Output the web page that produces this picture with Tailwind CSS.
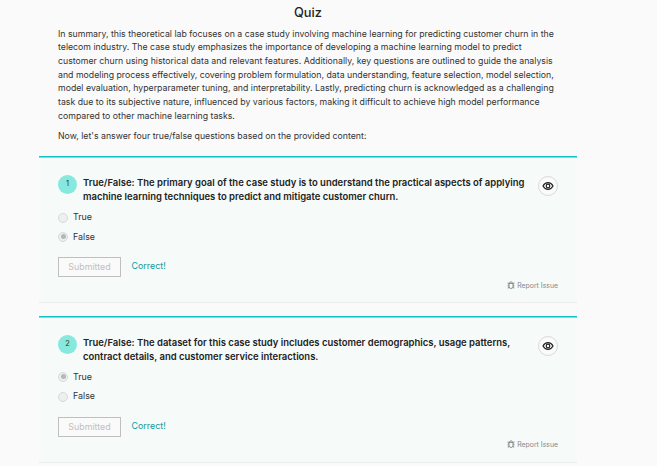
<!DOCTYPE html>
<html lang="en">
<head>
<meta charset="utf-8">
<title>Quiz</title>
<script src="https://cdn.jsdelivr.net/npm/@tailwindcss/browser@4"></script>
</head>
<body class="h-[466px] w-[658px] overflow-hidden border-r border-white bg-[#fafafa] font-['Inter',sans-serif] text-[8.900px] leading-[13.8px] text-[#333]">
<svg class="hidden">
  <symbol id="eye" viewBox="0 0 12 12"><g fill="none" stroke="#222"><path d="M1 6C2.200 3.700 3.900 2.700 6 2.700S9.800 3.700 11 6C9.800 8.300 8.100 9.300 6 9.300S2.200 8.300 1 6Z" stroke-width="1.200"/><circle cx="6" cy="6" r="1.800" stroke-width="1.200"/></g></symbol>
  <symbol id="bug" viewBox="0 0 8 8"><path d="M2 2.500h4V5.500a2 2 0 0 1-4 0ZM2.500 2.300a1.500 1.500 0 0 1 3 0M2 3.300 1 2.600V1.500M6 3.300 7 2.600V1.500M2 4.800H.500M6 4.800H7.500M2.200 6 1.200 6.600V7.500M5.800 6 6.800 6.600V7.500" fill="none" stroke="#777" stroke-width=".8"/></symbol>
</svg>
<main class="ml-[39px] w-[538px]">
  <h1 class="pt-1 text-center text-[12.800px] leading-[18px] font-medium text-[#222]">Quiz</h1>
  <div class="px-[19px] pt-[5.600px] text-[8.760px] leading-[13.700px] whitespace-nowrap">
    <p>In summary, this theoretical lab focuses on a case study involving machine learning for predicting customer churn in the<br>telecom industry. The case study emphasizes the importance of developing a machine learning model to predict<br>customer churn using historical data and relevant features. Additionally, key questions are outlined to guide the analysis<br>and modeling process effectively, covering problem formulation, data understanding, feature selection, model selection,<br>model evaluation, hyperparameter tuning, and interpretability. Lastly, predicting churn is acknowledged as a challenging<br>task due to its subjective nature, influenced by various factors, making it difficult to achieve high model performance<br>compared to other machine learning tasks.</p>
    <p class="mt-[6px]">Now, let's answer four true/false questions based on the provided content:</p>
  </div>

  <section class="mt-[12.800px] h-[147px] border-t border-b border-t-[#13c2c2] border-b-[#ececec] bg-[#f6faf9] px-[19px] pt-[17.500px] shadow-[inset_0_1px_0_#80dcdb]">
    <div class="flex items-start">
      <span class="flex size-[19px] shrink-0 items-center justify-center rounded-full bg-[#87e8de] text-[7.500px] text-[#333]">1</span>
      <h2 class="ml-[6px] grow pt-px text-[9.480px] leading-[14px] whitespace-nowrap font-semibold text-[#222]">True/False: The primary goal of the case study is to understand the practical aspects of applying<br>machine learning techniques to predict and mitigate customer churn.</h2>
      <button class="mt-px flex size-5 shrink-0 items-center justify-center rounded-full border border-[#d9d9d9] bg-[#fafafa]"><svg class="size-3"><use href="#eye"/></svg></button>
    </div>
    <div class="mt-[3px] flex h-5 items-center gap-[5px]"><span class="mt-0.5 size-[10px] rounded-full border border-[#d9d9d9] bg-[#eeefef]"></span><span>True</span></div>
    <div class="flex h-5 items-center gap-[5px]"><span class="flex size-[10px] items-center justify-center rounded-full border border-[#d9d9d9] bg-[#eeefef]"><i class="size-[5px] rounded-full bg-[#b5b8b7]"></i></span><span>False</span></div>
    <div class="mt-[10px] flex items-start">
      <button class="h-5 w-[63px] border border-[#bfbfbf] bg-[#fafafa] pb-px leading-[17px] text-[#bfbfbf]">Submitted</button>
      <span class="ml-[10.500px] pt-[2px] text-[#13999c]">Correct!</span>
    </div>
    <div class="mt-[2px] flex items-center justify-end gap-[2px] text-[6.900px] text-[#888]"><svg class="size-2"><use href="#bug"/></svg><span>Report Issue</span></div>
  </section>

  <section class="mt-[13px] h-[147px] border-t border-b border-t-[#13c2c2] border-b-[#ececec] bg-[#f6faf9] px-[19px] pt-[17.500px] shadow-[inset_0_1px_0_#80dcdb]">
    <div class="flex items-start">
      <span class="flex size-[19px] shrink-0 items-center justify-center rounded-full bg-[#87e8de] text-[7.500px] text-[#333]">2</span>
      <h2 class="ml-[6px] grow pt-px text-[9.480px] leading-[14px] whitespace-nowrap font-semibold text-[#222]">True/False: The dataset for this case study includes customer demographics, usage patterns,<br>contract details, and customer service interactions.</h2>
      <button class="mt-px flex size-5 shrink-0 items-center justify-center rounded-full border border-[#d9d9d9] bg-[#fafafa]"><svg class="size-3"><use href="#eye"/></svg></button>
    </div>
    <div class="mt-[3px] flex h-5 items-center gap-[5px]"><span class="flex size-[10px] items-center justify-center rounded-full border border-[#d9d9d9] bg-[#eeefef]"><i class="size-[5px] rounded-full bg-[#b5b8b7]"></i></span><span>True</span></div>
    <div class="flex h-[19px] items-center gap-[5px]"><span class="mt-px size-[10px] rounded-full border border-[#d9d9d9] bg-[#eeefef]"></span><span>False</span></div>
    <div class="mt-[11px] flex items-start">
      <button class="h-5 w-[63px] border border-[#bfbfbf] bg-[#fafafa] pb-px leading-[17px] text-[#bfbfbf]">Submitted</button>
      <span class="ml-[10.500px] pt-[2px] text-[#13999c]">Correct!</span>
    </div>
    <div class="mt-px flex items-center justify-end gap-[2px] text-[6.900px] text-[#888]"><svg class="size-2"><use href="#bug"/></svg><span>Report Issue</span></div>
  </section>
</main>
</body>
</html>
